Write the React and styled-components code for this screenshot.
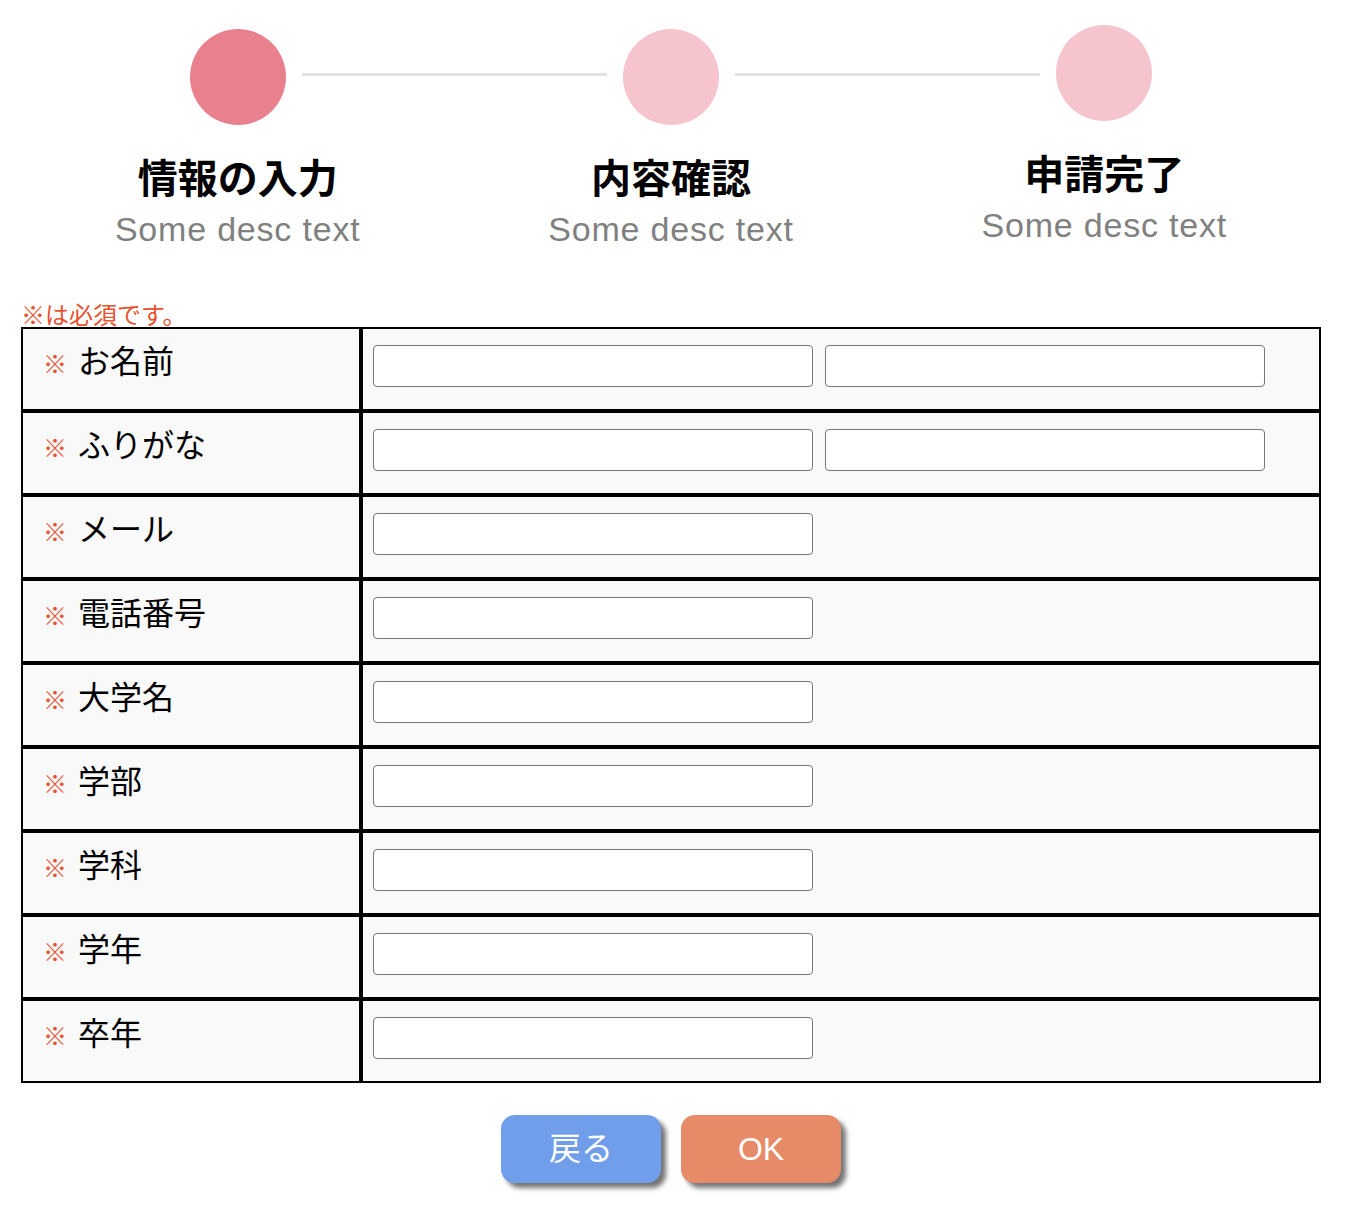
import React from "react";
import styled, { createGlobalStyle } from "styled-components";

const GlobalStyle = createGlobalStyle`
  body {
    margin: 0;
    background: #ffffff;
    font-family: "Liberation Sans", "Noto Sans CJK JP", sans-serif;
  }
`;

const Page = styled.div`
  width: 1300px;
  margin-left: 21px;
  padding-bottom: 26px;
`;

const Stepper = styled.div`
  display: grid;
  grid-template-columns: repeat(3, 1fr);
  padding-bottom: 52px;
`;

const Step = styled.div`
  position: relative;
  display: flex;
  flex-direction: column;
  align-items: center;
  padding-top: ${(p) => (p.$lifted ? "25px" : "29px")};
  margin-bottom: ${(p) => (p.$lifted ? "4px" : "0")};
`;

const Circle = styled.div`
  width: 96px;
  height: 96px;
  border-radius: 50%;
  background: ${(p) => (p.$active ? "#e8808e" : "#f5c4cc")};
`;

// connector from this circle to the next one
const Connector = styled.div`
  position: absolute;
  top: 73px;
  left: calc(50% + 64px);
  width: calc(100% - 128px);
  height: 3px;
  background: #e2e2e2;
`;

const StepTitle = styled.div`
  margin-top: 27px;
  font-family: "Noto Sans CJK JP", sans-serif;
  font-size: 40px;
  font-weight: 700;
  line-height: 48px;
  color: #000;
`;

const StepDesc = styled.div`
  margin-top: 9px;
  font-size: 34px;
  line-height: 40px;
  letter-spacing: 0.8px;
  color: #808080;
`;

const Note = styled.div`
  font-family: "Noto Sans CJK JP", sans-serif;
  font-size: 24px;
  line-height: 26px;
  color: #e8502e;
`;

const Form = styled.div`
  display: flex;
  flex-direction: column;
`;

const Row = styled.div`
  display: grid;
  grid-template-columns: 340px 960px;
  height: 84px;
`;

const LabelCell = styled.div`
  box-sizing: border-box;
  border: 2px solid #000;
  background: #f9f9f9;
  padding: 12px 0 0 20px;
  display: flex;
  align-items: baseline;
  gap: 11px;
  font-family: "Noto Sans CJK JP", sans-serif;
  line-height: 36px;
`;

const Mark = styled.span`
  font-size: 24px;
  color: #e8502e;
`;

const LabelText = styled.span`
  font-size: 32px;
  color: #000;
`;

const InputCell = styled.div`
  box-sizing: border-box;
  border: 2px solid #000;
  background: #f9f9f9;
  padding: 16px 10px 0;
  display: flex;
  gap: 12px;
  align-items: flex-start;
`;

const TextInput = styled.input`
  box-sizing: border-box;
  width: 440px;
  height: 42px;
  border: 1px solid #767676;
  border-radius: 4px;
  background: #fff;
  padding: 0 8px;
  font-size: 20px;
  font-family: inherit;
  outline: none;
`;

const Buttons = styled.div`
  display: flex;
  justify-content: center;
  gap: 20px;
  margin-top: 32px;
`;

const Button = styled.button`
  width: 160px;
  height: 68px;
  border: none;
  border-radius: 14px;
  background: ${(p) => p.$bg};
  color: #fff;
  font-family: "Liberation Sans", "Noto Sans CJK JP", sans-serif;
  font-size: 32px;
  line-height: 1;
  box-shadow: 5px 5px 5px rgba(0, 0, 0, 0.55);
  cursor: pointer;
`;

const steps = [
  { title: "情報の入力", active: true },
  { title: "内容確認" },
  { title: "申請完了", lifted: true },
];

const fields = [
  { label: "お名前", double: true },
  { label: "ふりがな", double: true },
  { label: "メール" },
  { label: "電話番号" },
  { label: "大学名" },
  { label: "学部" },
  { label: "学科" },
  { label: "学年" },
  { label: "卒年" },
];

function App() {
  return (
    <>
      <GlobalStyle />
      <Page>
        <Stepper>
          {steps.map((s, i) => (
            <Step key={s.title} $lifted={s.lifted}>
              <Circle $active={s.active} />
              {i < steps.length - 1 && <Connector />}
              <StepTitle>{s.title}</StepTitle>
              <StepDesc>Some desc text</StepDesc>
            </Step>
          ))}
        </Stepper>
        <Note>※は必須です。</Note>
        <Form>
          {fields.map((f) => (
            <Row key={f.label}>
              <LabelCell>
                <Mark>※</Mark>
                <LabelText>{f.label}</LabelText>
              </LabelCell>
              <InputCell>
                <TextInput type="text" />
                {f.double && <TextInput type="text" />}
              </InputCell>
            </Row>
          ))}
        </Form>
        <Buttons>
          <Button $bg="#709eea">戻る</Button>
          <Button $bg="#e68a68">OK</Button>
        </Buttons>
      </Page>
    </>
  );
}

export default App;
